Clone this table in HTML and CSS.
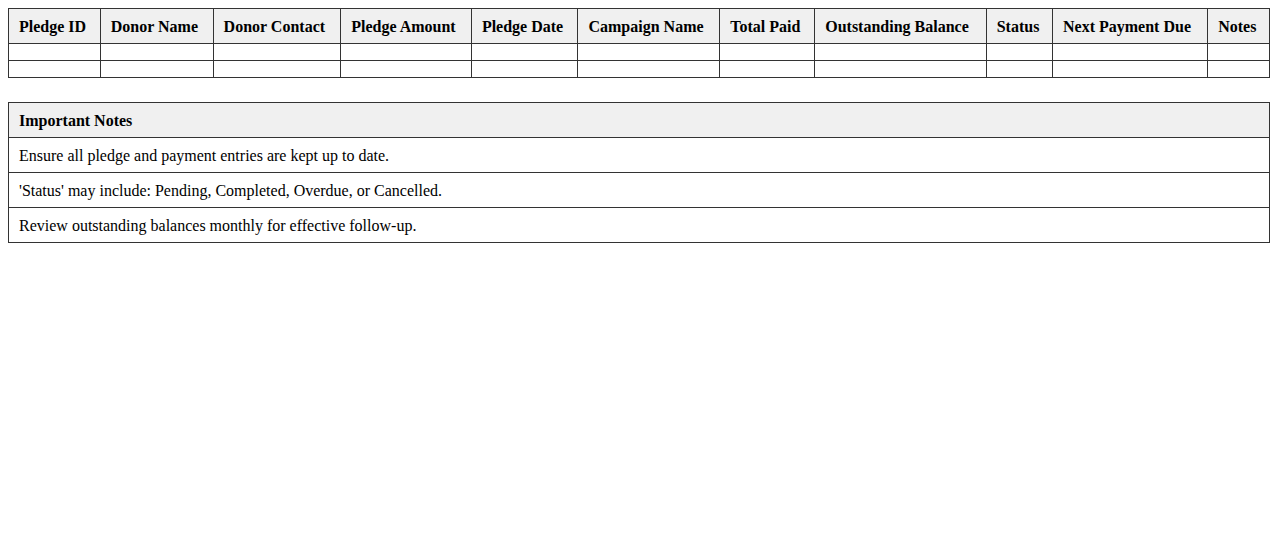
FILE: index.html
```html
<!DOCTYPE html>
<html lang="en">
<head>
    <meta charset="UTF-8">
    <meta name="viewport" content="width=device-width, initial-scale=1.0">
    <title>Pledge Tracker</title>
    <link rel="stylesheet" href="styles.css">
</head>
<body>
    <table class="pledges">
        <thead>
            <tr>
                <th>Pledge ID</th>
                <th>Donor Name</th>
                <th>Donor Contact</th>
                <th>Pledge Amount</th>
                <th>Pledge Date</th>
                <th>Campaign Name</th>
                <th>Total Paid</th>
                <th>Outstanding Balance</th>
                <th>Status</th>
                <th>Next Payment Due</th>
                <th>Notes</th>
            </tr>
        </thead>
        <tbody>
            <tr>
                <td></td><td></td><td></td><td></td><td></td><td></td><td></td><td></td><td></td><td></td><td></td>
            </tr>
            <tr>
                <td></td><td></td><td></td><td></td><td></td><td></td><td></td><td></td><td></td><td></td><td></td>
            </tr>
        </tbody>
    </table>

    <table class="notes">
        <thead>
            <tr><th>Important Notes</th></tr>
        </thead>
        <tbody>
            <tr><td>Ensure all pledge and payment entries are kept up to date.</td></tr>
            <tr><td>'Status' may include: Pending, Completed, Overdue, or Cancelled.</td></tr>
            <tr><td>Review outstanding balances monthly for effective follow-up.</td></tr>
        </tbody>
    </table>
</body>
</html>
```

FILE: styles.css
```css
body {
    font-family: "Liberation Serif", "Times New Roman", serif;
    font-size: 16px;
    color: #000;
    margin: 8px;
}

table {
    width: 100%;
    border-collapse: collapse;
}

th, td {
    border: 1px solid #333;
    padding: 9px 10px 7px;
    text-align: left;
    line-height: 18px;
}

th {
    background-color: #f0f0f0;
    font-weight: bold;
}

.notes {
    margin-top: 24px;
}
```
